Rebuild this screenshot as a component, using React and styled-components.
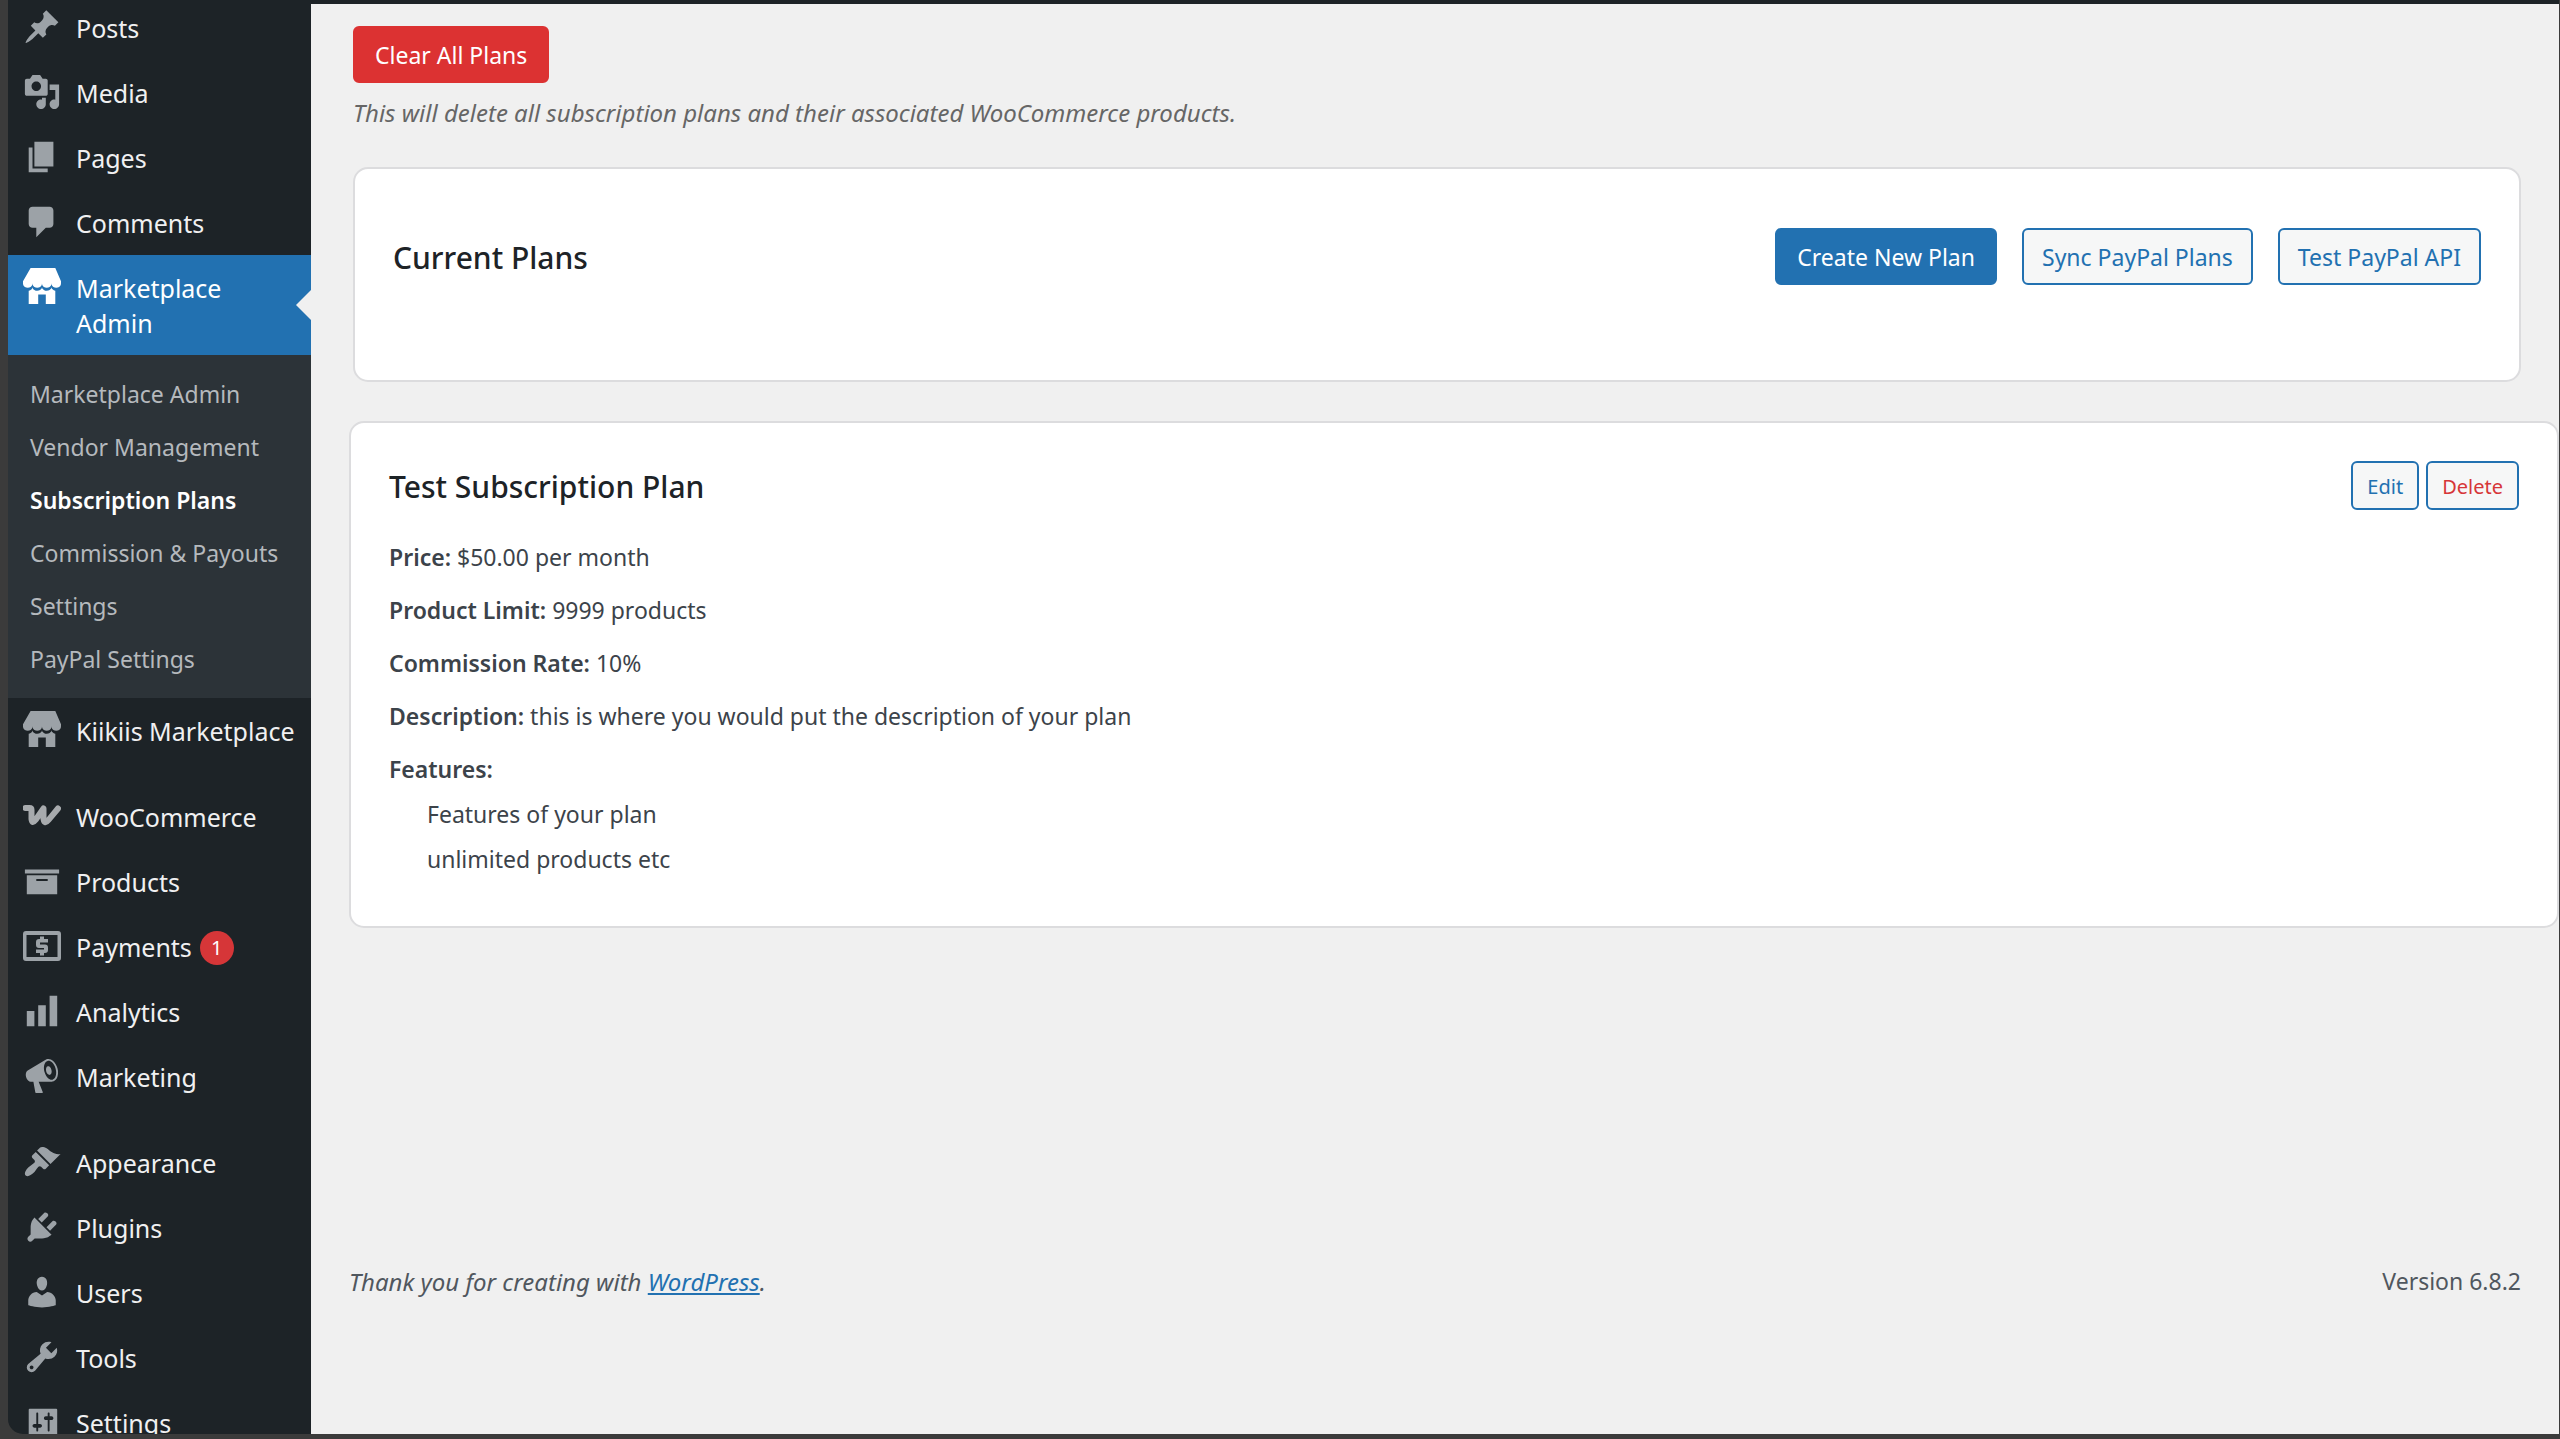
import React from "react";
import styled, { createGlobalStyle, css } from "styled-components";

const GlobalStyle = createGlobalStyle`
  *, *::before, *::after { box-sizing: border-box; }
  body {
    margin: 0;
    background: #3b3b3b;
    color: #3c434a;
    font-family: "Noto Sans", "Open Sans", sans-serif;
    font-size: 23px;
    line-height: 37px;
  }
  h2, h3, p, ul { margin: 0; padding: 0; }
  ul { list-style: none; }
`;

const Shell = styled.div`
  display: flex;
  height: 100vh;
  padding: 0 1px 5px 8px;
  overflow: hidden;
`;

const Sidebar = styled.nav`
  flex: none;
  width: 303px;
  overflow: hidden;
  background: #1d2327;
  border-bottom-left-radius: 15px;
`;

const Menu = styled.ul`
  margin-top: -5px;
`;

const MenuGroupGap = styled.li`
  height: 21px;
`;

const MenuLink = styled.a`
  position: relative;
  display: flex;
  color: ${(p) => (p.$current ? "#fff" : "#f0f0f1")};
  background: ${(p) => (p.$current ? "#2271b1" : "transparent")};
  font-size: 25px;
  line-height: 35px;
  text-decoration: none;

  ${(p) =>
    p.$current &&
    css`
      &::after {
        content: "";
        position: absolute;
        right: 0;
        top: 50%;
        margin-top: -15px;
        border: 15px solid transparent;
        border-left-width: 0;
        border-right-color: #f0f0f0;
      }
    `}
`;

const IconCell = styled.span`
  flex: none;
  display: flex;
  justify-content: center;
  width: 68px;
  padding-top: 13px;
  color: ${(p) => (p.$current ? "#fff" : "#9ca2a7")};

  svg {
    width: 38px;
    height: 38px;
    fill: currentColor;
  }
`;

const MenuText = styled.span`
  flex: 1;
  display: flex;
  align-items: center;
  gap: 8px;
  padding: 16px 15px 14px 0;
`;

const Count = styled.span`
  display: inline-flex;
  align-items: center;
  justify-content: center;
  width: 34px;
  height: 34px;
  border-radius: 50%;
  background: #d63638;
  color: #fff;
  font-size: 20px;
`;

const SubMenu = styled.ul`
  padding: 13px 0 12px;
  background: #2c3338;
`;

const SubLink = styled.a`
  display: block;
  padding: 8px 22px;
  line-height: 37px;
  white-space: nowrap;
  color: ${(p) => (p.$current ? "#fff" : "#b5b9bd")};
  font-weight: ${(p) => (p.$current ? 600 : 400)};
  text-decoration: none;
`;

const Content = styled.div`
  flex: 1;
  min-width: 0;
  display: flex;
  flex-direction: column;
  border-top: 4px solid #1d2327;
  background: #f0f0f0;
`;

const Main = styled.main`
  flex: 1;
  padding: 22px 0 0 38px;
`;

const Notice = styled.section`
  padding-left: 4px;
`;

const Hint = styled.p`
  margin-top: 11px;
  color: #666;
  font-size: 24px;
  font-style: italic;
`;

const Button = styled.button`
  height: 57px;
  padding: 2px 18px 0;
  border: 2px solid #2271b1;
  border-radius: 6px;
  background: #f6f7f7;
  color: #2271b1;
  font: inherit;
  white-space: nowrap;

  ${(p) => p.$variant === "primary" && css`padding: 2px 20px 0; background: #2271b1; color: #fff;`}
  ${(p) => p.$variant === "danger" && css`padding: 2px 20px 0; background: #dc3232; border-color: #dc3232; color: #fff;`}
  ${(p) => p.$small && css`height: 49px; padding: 2px 14px 0; font-size: 20px;`}
  ${(p) => p.$remove && css`color: #d63638;`}
`;

const Card = styled.section`
  border: 2px solid #dcdcde;
  border-radius: 15px;
  background: #fff;
`;

const ToolbarCard = styled(Card)`
  margin: 36px 38px 0 4px;
  padding: 59px 38px 95px;
`;

const PlanCard = styled(Card)`
  margin-top: 39px;
  padding: 38px 38px 44px;
`;

const CardHeader = styled.header`
  display: flex;
  align-items: center;
  justify-content: space-between;
`;

const Title = styled.h2`
  padding-top: 2px;
  color: #1d2327;
  font-size: 30px;
  line-height: 45px;
  font-weight: 500;
`;

const Actions = styled.div`
  display: flex;
  gap: ${(p) => (p.$tight ? 7 : 25)}px;
`;

const Details = styled.div`
  display: grid;
  gap: 16px;
  margin-top: 29px;

  strong { font-weight: 600; }
`;

const Features = styled.ul`
  padding-left: 38px;

  li { line-height: 45px; }
`;

const FeatureBlock = styled.div`
  display: grid;
  gap: 4px;
`;

const Footer = styled.footer`
  display: flex;
  justify-content: space-between;
  padding: 0 38px 134px;
  color: #50575e;

  em { font-size: 24px; }
  em a { color: #2271b1; }
`;

const paths = {
  post: "M10.44 3.02l1.82-1.82 6.36 6.35-1.83 1.82c-1.05-.68-2.48-.57-3.41.36l-.75.75c-.92.93-1.04 2.35-.35 3.41l-1.83 1.82-2.41-2.41-2.8 2.79c-.42.42-3.38 2.71-3.8 2.29s1.86-3.39 2.28-3.81l2.79-2.79L4.1 9.36l1.83-1.82c1.05.69 2.48.57 3.4-.36l.75-.75c.93-.92 1.05-2.35.36-3.41z",
  media: "M13 11V4c0-.55-.45-1-1-1h-1.67L9 1H5L3.67 3H2c-.55 0-1 .45-1 1v7c0 .55.45 1 1 1h10c.55 0 1-.45 1-1zM7 4.5c1.38 0 2.5 1.12 2.5 2.5S8.38 9.5 7 9.5 4.5 8.38 4.5 7 5.62 4.5 7 4.5zM14 6h5v10.5c0 1.38-1.12 2.5-2.5 2.5S14 17.88 14 16.5s1.12-2.5 2.5-2.5c.17 0 .34.02.5.05V9h-3V6zm-4 8.05V13h2v3.5c0 1.38-1.12 2.5-2.5 2.5S7 17.88 7 16.5 8.12 14 9.5 14c.17 0 .34.02.5.05z",
  page: "M6 15V2h10v13H6zm-1 1h8v2H3V5h2v11z",
  comment: "M5 2h9c1.1 0 2 .9 2 2v7c0 1.1-.9 2-2 2h-2l-5 5v-5H5c-1.1 0-2-.9-2-2V4c0-1.1.9-2 2-2z",
  store: "M1 10c.41.29.96.43 1.5.43.55 0 1.09-.14 1.5-.43.62-.46 1-1.17 1-2 0 .83.37 1.54 1 2 .41.29.96.43 1.5.43.55 0 1.09-.14 1.5-.43.62-.46 1-1.17 1-2 0 .83.37 1.54 1 2 .41.29.96.43 1.51.43.54 0 1.08-.14 1.49-.43.62-.46 1-1.17 1-2 0 .83.37 1.54 1 2 .41.29.96.43 1.5.43.55 0 1.09-.14 1.5-.43.63-.46 1-1.17 1-2V7l-3-7H4L0 7v1c0 .83.37 1.54 1 2zm2 8.99h5v-5h4v5h5v-7c-.37-.05-.72-.22-1-.43-.63-.45-1-.73-1-1.56 0 .83-.38 1.11-1 1.56-.41.3-.95.43-1.49.44-.55 0-1.1-.14-1.51-.44-.63-.45-1-.73-1-1.56 0 .83-.38 1.11-1 1.56-.41.3-.95.43-1.5.44-.54 0-1.09-.14-1.5-.44-.63-.45-1-.73-1-1.57 0 .84-.38 1.12-1 1.57-.29.21-.63.38-1 .44v6.99z",
  archive: "M19 4v2H1V4h18zM2 7h16v10H2V7zm11 3V9H7v1h6z",
  chart: "M18 18V2h-4v16h4zm-6 0V7H8v11h4zm-6 0v-8H2v8h4z",
  megaphone: "M18.15 5.94c.46 1.62.38 3.22-.02 4.48-.42 1.28-1.26 2.18-2.3 2.48-.16.06-.26.06-.4.06-.06.02-.12.02-.18.02-.06.02-.14.02-.22.02h-6.8l2.22 5.5c.02.14-.06.26-.14.34-.08.1-.24.16-.34.16H6.95c-.1 0-.26-.06-.34-.16-.08-.08-.16-.2-.14-.34l-1-5.5H4.25l-.02-.02c-.5.06-1.08-.18-1.54-.62s-.88-1.08-1.06-1.88c-.24-.8-.2-1.56-.02-2.2.18-.62.58-1.08 1.06-1.3l.02-.02 9-5.4c.1-.06.18-.1.24-.16.06-.04.14-.08.24-.12.16-.08.28-.12.5-.18 1.04-.3 2.24.1 3.22.98s1.84 2.24 2.26 3.86zm-2.58 5.98h-.02c.4-.1.74-.34 1.04-.7.58-.7.86-1.76.86-3.04 0-.64-.1-1.3-.28-1.98-.34-1.36-1.02-2.5-1.78-3.24s-1.68-1.1-2.46-.88c-.82.22-1.4.96-1.7 2-.32 1.04-.28 2.36.06 3.72.38 1.36 1 2.5 1.8 3.24.78.74 1.62 1.1 2.48.88zm-2.54-7.08c.22-.04.42-.02.62.04.38.16.76.48 1.02 1s.42 1.2.42 1.78c0 .3-.04.56-.12.8-.18.48-.44.84-.86.94-.34.1-.8-.06-1.14-.4s-.64-.86-.78-1.5c-.18-.62-.12-1.24.02-1.72s.48-.84.82-.94z",
  brush: "M14.48 11.06L7.41 3.99l1.5-1.5c.5-.56 2.3-.47 3.51.32 1.21.8 1.43 1.28 2.91 2.1 1.18.64 2.45 1.26 4.45.85zm-.71.71L6.7 4.7 4.93 6.47c-.39.39-.39 1.02 0 1.41l1.06 1.06c.39.39.39 1.03 0 1.42-.6.6-1.43 1.11-2.21 1.69-.35.26-.7.53-1.01.84C1.43 14.23.4 16.08 1.4 17.07c.99 1 2.84-.03 4.18-1.36.31-.31.58-.66.85-1.02.57-.78 1.08-1.61 1.69-2.21.39-.39 1.02-.39 1.41 0l1.06 1.06c.39.39 1.02.39 1.41 0z",
  plug: "M13.11 4.36L9.87 7.6 8 5.73l3.24-3.24c.35-.34 1.05-.2 1.56.32.52.51.66 1.21.31 1.55zm-8 1.77l.91-1.12 9.01 9.01-1.19.84c-.71.71-2.63 1.16-3.82 1.16H6.14L4.9 17.26c-.59.59-1.54.59-2.12 0-.59-.58-.59-1.53 0-2.12l1.24-1.24v-3.88c0-1.13.4-3.19 1.09-3.89zm7.26 3.97l3.24-3.24c.34-.35 1.04-.21 1.55.31.52.51.66 1.21.31 1.55l-3.24 3.25z",
  user: "M10 9.25c-2.27 0-2.73-3.44-2.73-3.44C7 4.02 7.82 2 9.97 2c2.16 0 2.98 2.02 2.71 3.81 0 0-.41 3.44-2.68 3.44zm0 2.57L12.72 10c2.39 0 4.52 2.33 4.52 4.53v2.49s-3.65 1.13-7.24 1.13c-3.65 0-7.24-1.13-7.24-1.13v-2.49c0-2.25 1.94-4.48 4.47-4.48z",
  wrench: "M16.68 9.77c-1.34 1.34-3.3 1.67-4.95.99l-5.41 6.52c-.99.99-2.59.99-3.58 0s-.99-2.59 0-3.57l6.52-5.42c-.68-1.65-.35-3.61.99-4.95 1.28-1.28 3.12-1.62 4.72-1.06l-2.89 2.89 2.82 2.82 2.86-2.87c.53 1.58.18 3.39-1.08 4.65zM3.81 16.21c.4.39 1.04.39 1.43 0 .4-.4.4-1.04 0-1.43-.39-.4-1.03-.4-1.43 0-.39.39-.39 1.03 0 1.43z",
  sliders: "M18 17V3.500c0-.3-.2-.5-.5-.5h-14c-.3 0-.5.2-.5.5V17c0 .3.2.5.5.5h14c.3 0 .5-.2.5-.5zM8 11h1c.55 0 1 .45 1 1s-.45 1-1 1H8v1.500c0 .28-.22.5-.5.5s-.5-.22-.5-.5V13H6c-.55 0-1-.45-1-1s.45-1 1-1h1V5.500c0-.28.22-.5.5-.5s.5.22.5.5V11zm5-2h-1c-.55 0-1-.45-1-1s.45-1 1-1h1V5.500c0-.28.22-.5.5-.5s.5.22.5.5V7h1c.55 0 1 .45 1 1s-.45 1-1 1h-1v5.500c0 .28-.22.5-.5.5s-.5-.22-.5-.5V9z",
};

function Glyph({ name }) {
  if (name === "woo") {
    return (
      <svg viewBox="0 0 38 38" aria-hidden="true">
        <path
          d="M2.5 11H6.5Q8.5 11 8.500 13V22Q9 27.500 12.500 23L20.500 11.500V22Q21.500 28 25.500 23L35 11.500"
          style={{ fill: "none" }}
          stroke="#a7aaad"
          strokeWidth="6"
          strokeLinecap="round"
          strokeLinejoin="round"
        />
      </svg>
    );
  }
  if (name === "payments") {
    return (
      <svg viewBox="0 0 38 38" aria-hidden="true">
        <path
          fillRule="evenodd"
          d="M3 4H35Q38 4 38 7V31Q38 34 35 34H3Q0 34 0 31V7Q0 4 3 4ZM3.500 8V30H34.500V8Z"
        />
        <path d="M17 9.500H21V12H25V15.500H17V17.500H22Q25 17.500 25 20.500V23Q25 26 22 26H21V28.500H17V26H13V22.500H21V21H16Q13 21 13 18V15Q13 12 16 12H17Z" />
      </svg>
    );
  }
  return (
    <svg viewBox="0 0 20 20" aria-hidden="true">
      <path d={paths[name]} />
    </svg>
  );
}

const marketplacePages = [
  "Marketplace Admin",
  "Vendor Management",
  "Subscription Plans",
  "Commission & Payouts",
  "Settings",
  "PayPal Settings",
];

const menuGroups = [
  [
    { icon: "post", label: "Posts" },
    { icon: "media", label: "Media" },
    { icon: "page", label: "Pages" },
    { icon: "comment", label: "Comments" },
    { icon: "store", label: "Marketplace Admin", pages: marketplacePages },
    { icon: "store", label: "Kiikiis Marketplace" },
  ],
  [
    { icon: "woo", label: "WooCommerce" },
    { icon: "archive", label: "Products" },
    { icon: "payments", label: "Payments", count: 1 },
    { icon: "chart", label: "Analytics" },
    { icon: "megaphone", label: "Marketing" },
  ],
  [
    { icon: "brush", label: "Appearance" },
    { icon: "plug", label: "Plugins" },
    { icon: "user", label: "Users" },
    { icon: "wrench", label: "Tools" },
    { icon: "sliders", label: "Settings" },
  ],
];

function Item({ icon, label, count, pages }) {
  const current = Boolean(pages);
  return (
    <li>
      <MenuLink href="#" $current={current}>
        <IconCell $current={current}>
          <Glyph name={icon} />
        </IconCell>
        <MenuText>
          {label}
          {count && <Count>{count}</Count>}
        </MenuText>
      </MenuLink>
      {pages && (
        <SubMenu>
          {pages.map((page) => (
            <li key={page}>
              <SubLink href="#" $current={page === "Subscription Plans"}>
                {page}
              </SubLink>
            </li>
          ))}
        </SubMenu>
      )}
    </li>
  );
}

const planDetails = [
  ["Price:", "$50.00 per month"],
  ["Product Limit:", "9999 products"],
  ["Commission Rate:", "10%"],
  ["Description:", "this is where you would put the description of your plan"],
];

export default function App() {
  return (
    <>
      <GlobalStyle />
      <Shell>
        <Sidebar aria-label="Main menu">
          <Menu>
            {menuGroups.map((group, index) => (
              <React.Fragment key={index}>
                {index > 0 && <MenuGroupGap aria-hidden="true" />}
                {group.map((item) => (
                  <Item key={item.label} {...item} />
                ))}
              </React.Fragment>
            ))}
          </Menu>
        </Sidebar>
        <Content>
          <Main>
            <Notice>
              <Button type="button" $variant="danger">Clear All Plans</Button>
              <Hint>
                This will delete all subscription plans and their associated WooCommerce products.
              </Hint>
            </Notice>
            <ToolbarCard>
              <CardHeader>
                <Title>Current Plans</Title>
                <Actions>
                  <Button type="button" $variant="primary">Create New Plan</Button>
                  <Button type="button">Sync PayPal Plans</Button>
                  <Button type="button">Test PayPal API</Button>
                </Actions>
              </CardHeader>
            </ToolbarCard>
            <PlanCard>
              <CardHeader>
                <Title as="h3">Test Subscription Plan</Title>
                <Actions $tight>
                  <Button type="button" $small>Edit</Button>
                  <Button type="button" $small $remove>Delete</Button>
                </Actions>
              </CardHeader>
              <Details>
                {planDetails.map(([name, value]) => (
                  <p key={name}>
                    <strong>{name}</strong> {value}
                  </p>
                ))}
                <FeatureBlock>
                  <p><strong>Features:</strong></p>
                  <Features>
                    <li>Features of your plan</li>
                    <li>unlimited products etc</li>
                  </Features>
                </FeatureBlock>
              </Details>
            </PlanCard>
          </Main>
          <Footer>
            <em>
              Thank you for creating with <a href="#">WordPress</a>.
            </em>
            <span>Version 6.8.2</span>
          </Footer>
        </Content>
      </Shell>
    </>
  );
}
